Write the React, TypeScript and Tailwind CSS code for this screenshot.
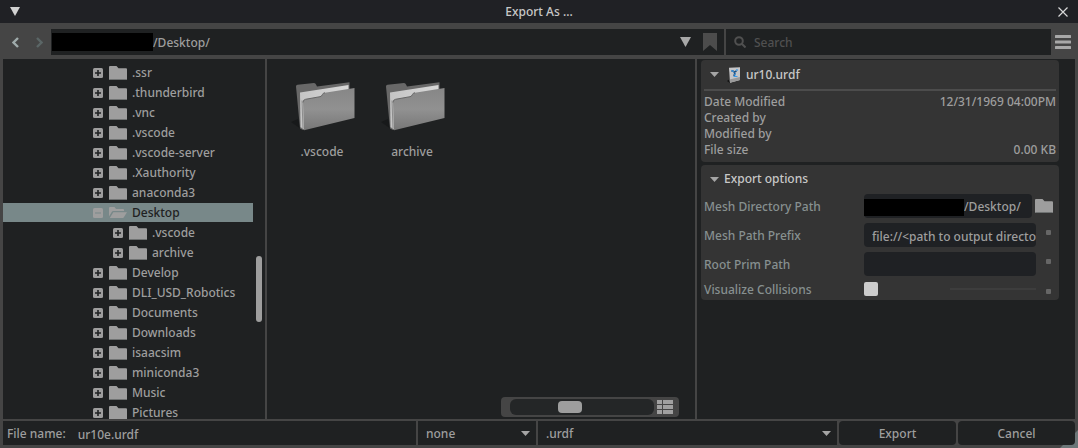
import { useState } from 'react';

type TreeNode = {
  name: string;
  nested?: boolean;
  open?: boolean;
};

const TREE: TreeNode[] = [
  { name: '.ssr' },
  { name: '.thunderbird' },
  { name: '.vnc' },
  { name: '.vscode' },
  { name: '.vscode-server' },
  { name: '.Xauthority' },
  { name: 'anaconda3' },
  { name: 'Desktop', open: true },
  { name: '.vscode', nested: true },
  { name: 'archive', nested: true },
  { name: 'Develop' },
  { name: 'DLI_USD_Robotics' },
  { name: 'Documents' },
  { name: 'Downloads' },
  { name: 'isaacsim' },
  { name: 'miniconda3' },
  { name: 'Music' },
  { name: 'Pictures' },
];

const DETAILS = [
  { label: 'Date Modified', value: '12/31/1969 04:00PM' },
  { label: 'Created by', value: '' },
  { label: 'Modified by', value: '' },
  { label: 'File size', value: '0.00 KB' },
];

function FolderIcon() {
  return (
    <svg width="18" height="14" viewBox="0 0 18 14" className="shrink-0">
      <path d="M1 0h6.5l2 2.2H17a1 1 0 0 1 1 1V13a1 1 0 0 1-1 1H1a1 1 0 0 1-1-1V1a1 1 0 0 1 1-1z" fill="#9e9e9e" />
      <path d="M.5 13.5h17" stroke="#6f7272" />
    </svg>
  );
}

function OpenFolderIcon() {
  return (
    <svg width="18" height="14" viewBox="0 0 18 14" className="shrink-0" fill="#9e9e9e">
      <path d="M0 10.5V2a1 1 0 0 1 1-1h4.500l1.500 2h7a1 1 0 0 1 1 1v1H4.200a1.500 1.500 0 0 0-1.300.8z" />
      <path d="M4.300 6.200H18l-3.300 5.300a1 1 0 0 1-.8.500H.8z" />
    </svg>
  );
}

function ToggleIcon({ open }: { open?: boolean }) {
  return (
    <svg width="10" height="10" viewBox="0 0 10 10" className="shrink-0">
      <rect width="10" height="10" rx="1.500" fill="#9e9e9e" />
      <path d={open ? 'M2 5h6' : 'M2 5h6M5 2v6'} stroke={open ? '#788889' : '#1f2122'} strokeWidth={open ? 1 : 1.6} />
    </svg>
  );
}

function LargeFolderIcon() {
  return (
    <svg width="64" height="52" viewBox="0 0 64 52">
      <defs>
        <linearGradient id="folder-front" x1="0" y1="0" x2="0" y2="1">
          <stop offset="0" stopColor="#868686" />
          <stop offset="0.500" stopColor="#919191" />
          <stop offset="1" stopColor="#777777" />
        </linearGradient>
        <linearGradient id="folder-paper" x1="0" y1="0" x2="1" y2="0">
          <stop offset="0" stopColor="#c4c4c4" />
          <stop offset="1" stopColor="#d8d8d8" />
        </linearGradient>
      </defs>
      <path d="M0 42l7-3 3 10z" fill="#17191a" />
      <path d="M5 6.500Q5 5 6.500 4.800L23 3q1.500 0 2 1.500l1 2L58.500 2.200V34L12 50l-3-1.500z" fill="#686868" />
      <path d="M9 12.500L57.500 5v30L13 49.500 9.500 47z" fill="url(#folder-paper)" />
      <path d="M11 20.500l1 28" stroke="#8c8c8c" strokeWidth="1" />
      <path d="M12 22.500Q12 19.800 14.500 19.300l14.500-2.600q1.700-.3 2.300-2t2.700-2L63.500 8v30L13 50.200z" fill="url(#folder-front)" />
      <path
        d="M12 22.500Q12 19.800 14.500 19.300l14.500-2.600q1.700-.3 2.300-2t2.700-2"
        fill="none"
        stroke="#666666"
      />
    </svg>
  );
}

function UrdfIcon() {
  return (
    <svg width="14" height="16" viewBox="0 0 14 16" className="shrink-0">
      <path d="M0 14l3 2v-4z" fill="#111111" />
      <path d="M2 .8L13 .3V13L3 15.700z" fill="#c6c6c8" />
      <path d="M2.500 12.500L13 10v3L3 15.700z" fill="#9a9a9a" />
      <path d="M4.500 4h2M6.500 5.500l3-1.500M8 6L7 9" fill="none" stroke="#1d4f80" strokeWidth="1.800" />
      <path d="M9 2.800l2 .4M4.500 3.200l2 1.500M8.500 6.500l-1 2M6.500 9.500h4" fill="none" stroke="#3d9be8" strokeWidth="1.200" />
    </svg>
  );
}

function Caret() {
  return (
    <svg width="9" height="5" viewBox="0 0 9 5" className="shrink-0">
      <path d="M0 0h9L4.500 5z" fill="#a5a5a5" />
    </svg>
  );
}

function TitleBar() {
  return (
    <header className="flex h-[23px] shrink-0 items-center justify-between bg-[#202125] px-2.5 text-[#c8c8c8]">
      <button aria-label="Collapse" className="w-4">
        <svg width="10" height="9" viewBox="0 0 10 9">
          <path d="M0 0h10L5 9z" fill="#d2d2d2" />
        </svg>
      </button>
      <h1>Export As ...</h1>
      <button aria-label="Close" className="flex w-4 justify-end">
        <svg width="10" height="10" viewBox="0 0 10 10">
          <path d="M.5.5l9 9M9.500.5l-9 9" stroke="#d8d8d8" strokeWidth="1.200" />
        </svg>
      </button>
    </header>
  );
}

function Toolbar() {
  return (
    <div className="flex h-9 shrink-0 items-center pt-0.5">
      <div className="flex w-[51px] shrink-0 items-center justify-between pr-2 pl-3">
        <button aria-label="Back">
          <svg width="7" height="11" viewBox="0 0 7 11" fill="none">
            <path d="M6 1L1.500 5.500 6 10" stroke="#9fabab" strokeWidth="2.400" />
          </svg>
        </button>
        <button aria-label="Forward">
          <svg width="7" height="11" viewBox="0 0 7 11" fill="none">
            <path d="M1 1l4.500 4.500L1 10" stroke="#5b6666" strokeWidth="2.400" />
          </svg>
        </button>
      </div>
      <div className="flex h-[26px] flex-1 items-center bg-[#1f2122] pr-[7px] pl-px">
        <span className="h-[18px] w-[101px] shrink-0 bg-black" />
        <input aria-label="Path" defaultValue="/Desktop/" className="min-w-0 flex-1 pt-0.5 outline-none" />
        <button aria-label="Recent paths">
          <svg width="11" height="10" viewBox="0 0 11 10">
            <path d="M0 0h11L5.500 10z" fill="#a8a8a8" />
          </svg>
        </button>
        <button aria-label="Bookmark" className="ml-3">
          <svg width="14" height="18" viewBox="0 0 14 18">
            <path d="M0 0h14v18l-7-6-7 6z" fill="#4c4c4c" />
          </svg>
        </button>
      </div>
      <label className="ml-0.5 flex h-[26px] w-[325px] items-center gap-2 bg-[#1f2122] px-2">
        <svg width="12" height="12" viewBox="0 0 12 12" fill="none" stroke="#505050" strokeWidth="2">
          <circle cx="5" cy="5" r="3.800" />
          <path d="M7.800 7.800l3.700 3.700" />
        </svg>
        <input
          type="search"
          aria-label="Search"
          placeholder="Search"
          className="min-w-0 flex-1 pt-0.5 outline-none placeholder:text-[#505050]"
        />
      </label>
      <button aria-label="Menu" className="mr-[7px] ml-1">
        <svg width="16" height="14" viewBox="0 0 16 14" fill="#a8a8a8">
          <rect width="16" height="3" rx="0.500" />
          <rect y="5.500" width="16" height="3" rx="0.500" />
          <rect y="11" width="16" height="3" rx="0.500" />
        </svg>
      </button>
    </div>
  );
}

function FolderTree() {
  return (
    <nav className="flex w-[262px] shrink-0 overflow-hidden bg-[#1f2122]">
      <ul className="flex-1 pt-1">
        {TREE.map(({ name, nested, open }) => (
          <li key={`${name}-${nested}`} className="h-5">
            <button
              className={`flex h-[19px] w-full items-center text-left ${nested ? 'pl-[110px]' : 'pl-[90px]'} ${
                open ? 'bg-[#788889] text-[#1f2122]' : ''
              }`}
            >
              <ToggleIcon open={open} />
              <span className="mr-[5px] ml-1.5">{open ? <OpenFolderIcon /> : <FolderIcon />}</span>
              {name}
            </button>
          </li>
        ))}
      </ul>
      <div className="w-3 shrink-0 pt-[197px] pl-[3px]">
        <div className="h-[66px] w-1.5 rounded-sm bg-[#9e9e9e]" />
      </div>
    </nav>
  );
}

function FileGrid() {
  const [zoom, setZoom] = useState(40);

  return (
    <section className="relative min-w-0 flex-1 bg-[#1f2122]">
      <div className="flex gap-[26px] px-6 pt-[21px]">
        {['.vscode', 'archive'].map((name) => (
          <button key={name} className="flex w-16 flex-col items-center gap-3">
            <LargeFolderIcon />
            <span className="pr-0.5">{name}</span>
          </button>
        ))}
      </div>
      <div className="absolute right-4 bottom-0.5 flex h-5 items-center gap-[3px] rounded-sm bg-[#454545] pr-1.5 pl-[9px]">
        <input
          type="range"
          aria-label="Thumbnail size"
          value={zoom}
          onChange={(e) => setZoom(Number(e.target.value))}
          className="h-4 w-36 appearance-none rounded-md bg-[#242627] [&::-webkit-slider-thumb]:h-3 [&::-webkit-slider-thumb]:w-6 [&::-webkit-slider-thumb]:appearance-none [&::-webkit-slider-thumb]:rounded [&::-webkit-slider-thumb]:bg-[#9e9e9e]"
        />
        <button aria-label="List view">
          <svg width="16" height="14" viewBox="0 0 16 14" fill="#a0a0a0">
            <path d="M0 0h5v4H0zM6 0h10v4H6zM0 5h5v4H0zM6 5h10v4H6zM0 10h5v4H0zM6 10h10v4H6z" />
          </svg>
        </button>
      </div>
    </section>
  );
}

function FileDetails() {
  return (
    <section className="rounded-sm bg-[#343434] px-[3px] pb-1">
      <h2 className="flex h-[31px] items-center border-b-2 border-[#4c4c4c] text-[#c8c8c8]">
        <button aria-label="Toggle file details" className="mr-2 ml-1.5">
          <Caret />
        </button>
        <UrdfIcon />
        <span className="ml-[5px]">ur10.urdf</span>
      </h2>
      <dl className="pt-[3px]">
        {DETAILS.map(({ label, value }) => (
          <div key={label} className="flex h-4 items-center justify-between">
            <dt>{label}</dt>
            <dd>{value}</dd>
          </div>
        ))}
      </dl>
    </section>
  );
}

function Dot() {
  return <span className="mr-[5px] mb-1.5 ml-auto size-[5px] rounded-[1px] bg-[#666666]" />;
}

function ExportOptions() {
  return (
    <section className="rounded-sm bg-[#343434] px-[3px] pb-[3px] text-[#879090]">
      <h2 className="flex h-7 items-center text-[#c8c8c8]">
        <button aria-label="Toggle export options" className="mr-[5px] ml-1.5">
          <Caret />
        </button>
        Export options
      </h2>
      <div className="flex flex-col gap-[5px] pt-px">
        <div className="flex h-6 items-center">
          <label htmlFor="mesh-dir" className="w-40 pt-0.5">
            Mesh Directory Path
          </label>
          <div className="flex h-6 w-[168px] items-center rounded-sm bg-[#1f2124] pt-0.5">
            <span className="h-[17px] w-[100px] shrink-0 bg-black" />
            <input id="mesh-dir" defaultValue="/Desktop/" className="w-full min-w-0 text-[#9e9e9e] outline-none" />
          </div>
          <button aria-label="Browse" className="ml-[3px]">
            <FolderIcon />
          </button>
        </div>
        <div className="flex h-6 items-center">
          <label htmlFor="mesh-prefix" className="w-40 pt-0.5">
            Mesh Path Prefix
          </label>
          <div className="h-6 w-[172px] rounded-sm bg-[#1f2124] pl-2">
            <input
              id="mesh-prefix"
              defaultValue="file://<path to output directory>"
              className="h-6 w-full pt-0.5 text-[#9e9e9e] outline-none"
            />
          </div>
          <Dot />
        </div>
        <div className="flex h-6 items-center">
          <label htmlFor="root-prim" className="w-40 pt-0.5">
            Root Prim Path
          </label>
          <input id="root-prim" className="h-6 w-[172px] rounded-sm bg-[#1f2124] px-2 text-[#9e9e9e] outline-none" />
          <Dot />
        </div>
        <div className="flex h-4 items-center">
          <label htmlFor="collisions" className="w-40 pt-0.5">
            Visualize Collisions
          </label>
          <input
            id="collisions"
            type="checkbox"
            className="size-3.5 appearance-none rounded-xs bg-[#cccccc] checked:bg-[#788889]"
          />
          <span className="ml-[72px] h-0.5 w-[86px] bg-[#3d3d3d]" />
          <span className="mt-1 mr-[5px] ml-auto size-[5px] rounded-[1px] bg-[#666666]" />
        </div>
      </div>
    </section>
  );
}

function FilterSelect({ label, value }: { label: string; value: string }) {
  return (
    <div className="relative h-full">
      <select aria-label={label} className="h-full w-full appearance-none bg-[#1f2122] px-2 pt-0.5 outline-none">
        <option>{value}</option>
      </select>
      <span className="pointer-events-none absolute top-2.5 right-1.5">
        <Caret />
      </span>
    </div>
  );
}

function Footer() {
  return (
    <footer className="relative mx-[3px] mt-0.5 mb-[3px] flex h-6 shrink-0 gap-0.5">
      <label className="flex min-w-0 flex-1 items-center gap-3 bg-[#1f2122] pt-0.5 pl-1">
        File name:
        <input defaultValue="ur10e.urdf" className="min-w-0 flex-1 pt-0.5 outline-none" />
      </label>
      <div className="w-[118px]">
        <FilterSelect label="File postfix" value="none" />
      </div>
      <div className="w-[299px]">
        <FilterSelect label="File extension" value=".urdf" />
      </div>
      <button className="w-[117px] rounded-sm bg-[#1f2122] pt-0.5">Export</button>
      <button className="w-[117px] rounded-sm bg-[#1f2122] pt-0.5">Cancel</button>
    </footer>
  );
}

export default function App() {
  return (
    <main className="relative flex h-screen flex-col overflow-hidden bg-[#454545] font-['Noto_Sans','Open_Sans',sans-serif] text-xs leading-4 font-medium text-[#9e9e9e]">
      {/* resize grip */}
      <svg width="18" height="18" viewBox="0 0 18 18" className="absolute right-0 bottom-0">
        <path d="M18 0v18H0z" fill="#6c7678" />
      </svg>
      <TitleBar />
      <Toolbar />
      <div className="mx-[3px] flex min-h-0 flex-1 gap-0.5">
        <FolderTree />
        <FileGrid />
        <aside className="flex w-[378px] shrink-0 flex-col gap-[3px] overflow-hidden bg-[#1f2122] pt-px pr-4 pl-1">
          <FileDetails />
          <ExportOptions />
        </aside>
      </div>
      <Footer />
    </main>
  );
}
